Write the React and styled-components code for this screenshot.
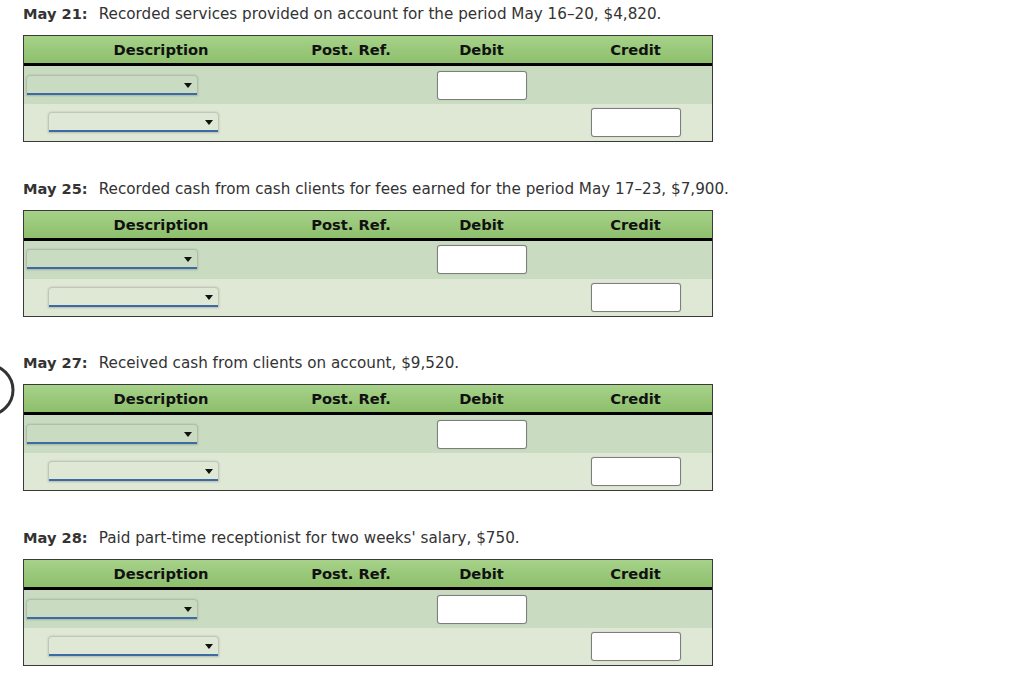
import React from 'react';
import styled, { createGlobalStyle } from 'styled-components';

const GlobalStyle = createGlobalStyle`
  body {
    margin: 0;
    background: #ffffff;
    font-family: "DejaVu Sans", Verdana, sans-serif;
    color: #222;
  }
`;

const Page = styled.div`
  position: relative;
  width: 1024px;
  height: 695px;
  padding: 4px 0 0 23px;
  box-sizing: border-box;
  display: flex;
  flex-direction: column;
  gap: 36.7px;
`;

const Entry = styled.section`
  display: flex;
  flex-direction: column;
  gap: 11px;
`;

const Title = styled.p`
  margin: 0;
  height: 20px;
  line-height: 20px;
  font-size: 15.2px;
  color: #333;
  white-space: nowrap;
`;

const DateLabel = styled.b`
  font-weight: bold;
  font-size: 14.6px;
  color: #333;
  margin-right: 11px;
`;

const Table = styled.div`
  width: 690px;
  box-sizing: border-box;
  border: 1px solid #3a3a3a;
`;

const cols = '274px 106px 155px 153px';

const Header = styled.div`
  display: grid;
  grid-template-columns: ${cols};
  height: 27px;
  align-items: center;
  background: linear-gradient(#a6d289, #8dbf6c);
  border-bottom: 3px solid #000;
`;

const HeadCell = styled.div`
  text-align: center;
  font-weight: bold;
  font-size: 14.7px;
  color: #111;
`;

const Row = styled.div`
  display: grid;
  grid-template-columns: ${cols};
  height: ${({ $h }) => $h}px;
  align-items: center;
  background: ${({ $bg }) => $bg};
`;

const Cell = styled.div`
  display: flex;
  justify-content: ${({ $align }) => $align || 'center'};
  padding-left: ${({ $indent }) => $indent || 0}px;
`;

const Select = styled.div`
  position: relative;
  width: ${({ $w }) => $w}px;
  height: 19px;
  box-sizing: border-box;
  border-radius: 3px;
  box-shadow: 0 0 2px 1px rgba(120, 120, 120, 0.4);
  border-bottom: 2px solid #3b6aa4;
  border-bottom-left-radius: 0;
  border-bottom-right-radius: 0;

  &::after {
    content: '';
    position: absolute;
    right: 5px;
    top: 7px;
    border-left: 4px solid transparent;
    border-right: 4px solid transparent;
    border-top: 5px solid #111;
  }
`;

const Input = styled.div`
  width: 90px;
  height: 29px;
  box-sizing: border-box;
  background: #fff;
  border: 1px solid #7d7d7d;
  border-radius: 3px;
  box-shadow: 0 0 1px rgba(0, 0, 0, 0.3);
`;

const Marker = styled.svg`
  position: absolute;
  left: 0;
  top: 362px;
`;

const entries = [
  { date: 'May 21:', text: 'Recorded services provided on account for the period May 16–20, $4,820.' },
  { date: 'May 25:', text: 'Recorded cash from cash clients for fees earned for the period May 17–23, $7,900.' },
  { date: 'May 27:', text: 'Received cash from clients on account, $9,520.' },
  { date: 'May 28:', text: "Paid part-time receptionist for two weeks' salary, $750." },
];

function Journal({ date, text }) {
  return (
    <Entry>
      <Title>
        <DateLabel>{date}</DateLabel>
        {text}
      </Title>
      <Table>
        <Header>
          <HeadCell>Description</HeadCell>
          <HeadCell>Post. Ref.</HeadCell>
          <HeadCell>Debit</HeadCell>
          <HeadCell>Credit</HeadCell>
        </Header>
        <Row $h={38} $bg="#c9dcc1">
          <Cell $align="flex-start" $indent={3}>
            <Select $w={170} />
          </Cell>
          <Cell />
          <Cell>
            <Input />
          </Cell>
          <Cell />
        </Row>
        <Row $h={37} $bg="#dfe7d5">
          <Cell $align="flex-start" $indent={25}>
            <Select $w={169} />
          </Cell>
          <Cell />
          <Cell />
          <Cell>
            <Input />
          </Cell>
        </Row>
      </Table>
    </Entry>
  );
}

export default function App() {
  return (
    <>
      <GlobalStyle />
      <Page>
        {entries.map((e) => (
          <Journal key={e.date} {...e} />
        ))}
        <Marker width="20" height="60" viewBox="0 0 20 60">
          <circle cx="-12" cy="28" r="25" fill="none" stroke="#333" strokeWidth="3" />
        </Marker>
      </Page>
    </>
  );
}
